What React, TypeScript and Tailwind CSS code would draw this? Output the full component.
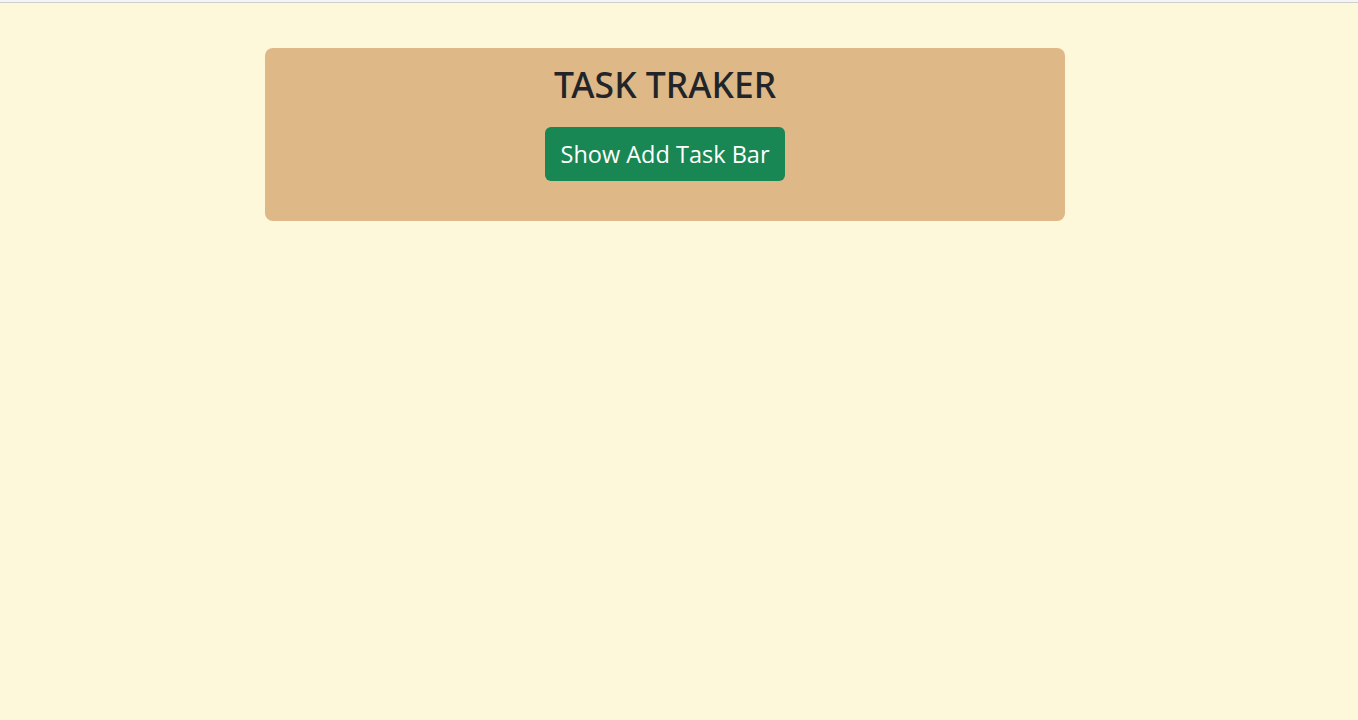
export default function App() {
  return (
    <div className="min-h-screen bg-[#fdf8d9]" style={{ fontFamily: '"Open Sans", "Noto Sans", sans-serif' }}>
      <div className="h-[2px] bg-[#f4f4f4]" />
      <div className="h-px bg-[#cfcfcf]" />
      <div className="pt-[45px] pl-[265px]">
        <div className="flex w-[800px] flex-col items-center rounded-lg bg-[#deb887] pt-[14px] pb-[40px]">
          <h1
            className="m-0 text-[35.5px] leading-[44px] font-medium text-[#212529]"
            style={{ fontFamily: '"Noto Sans", "Open Sans", sans-serif' }}
          >
            TASK TRAKER
          </h1>
          <button className="mt-[21px] h-[54px] w-[240px] rounded-md bg-[#198754] pt-[2px] text-[23.5px] text-white">
            Show Add Task Bar
          </button>
        </div>
      </div>
    </div>
  );
}
